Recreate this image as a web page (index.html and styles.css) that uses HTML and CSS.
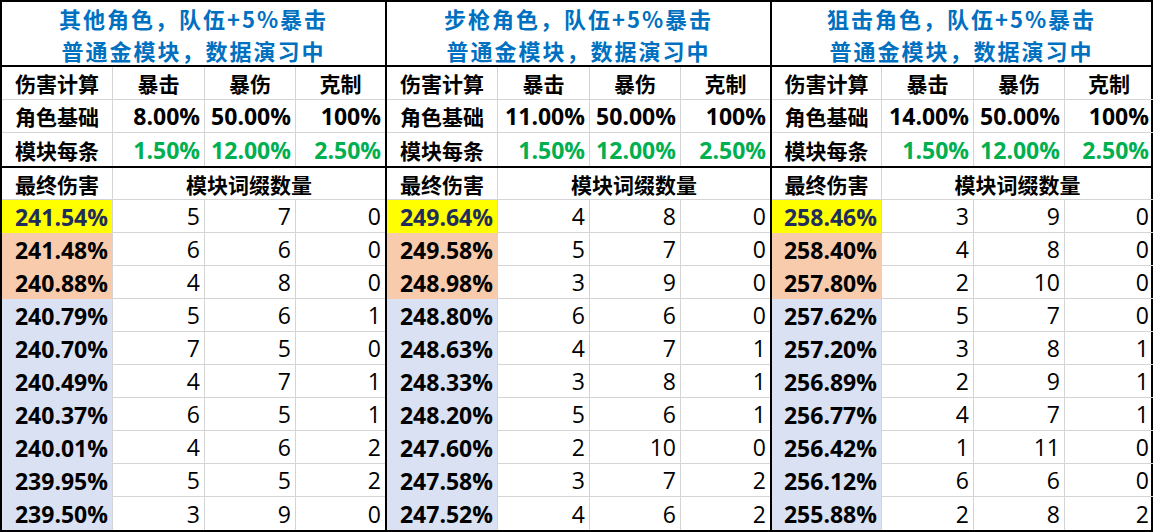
FILE: index.html
```html
<!DOCTYPE html>
<html lang="zh-CN">
<head>
<meta charset="utf-8">
<title>模块词缀计算</title>
<link rel="stylesheet" href="styles.css">
</head>
<body>
<main class="sheet">
  <section class="panel p1">
    <div class="title"><div class="tl">其他角色，队伍+5%暴击</div><div class="tl">普通金模块，数据演习中</div></div>
    <div class="grid params">
      <div class="c h">伤害计算</div><div class="c h ctr">暴击</div><div class="c h ctr">暴伤</div><div class="c h ctr last">克制</div>
      <div class="c h">角色基础</div><div class="c num b">8.00%</div><div class="c num b">50.00%</div><div class="c num b last">100%</div>
      <div class="c h bot">模块每条</div><div class="c num b g bot">1.50%</div><div class="c num b g bot">12.00%</div><div class="c num b g bot last">2.50%</div>
    </div>
    <div class="grid results">
      <div class="c h">最终伤害</div><div class="c h ctr span3">模块词缀数量</div>
      <div class="c k y">241.54%</div><div class="c num">5</div><div class="c num">7</div><div class="c num last">0</div>
      <div class="c k o">241.48%</div><div class="c num">6</div><div class="c num">6</div><div class="c num last">0</div>
      <div class="c k o">240.88%</div><div class="c num">4</div><div class="c num">8</div><div class="c num last">0</div>
      <div class="c k bl">240.79%</div><div class="c num">5</div><div class="c num">6</div><div class="c num last">1</div>
      <div class="c k bl">240.70%</div><div class="c num">7</div><div class="c num">5</div><div class="c num last">0</div>
      <div class="c k bl">240.49%</div><div class="c num">4</div><div class="c num">7</div><div class="c num last">1</div>
      <div class="c k bl">240.37%</div><div class="c num">6</div><div class="c num">5</div><div class="c num last">1</div>
      <div class="c k bl">240.01%</div><div class="c num">4</div><div class="c num">6</div><div class="c num last">2</div>
      <div class="c k bl">239.95%</div><div class="c num">5</div><div class="c num">5</div><div class="c num last">2</div>
      <div class="c k bl bot">239.50%</div><div class="c num bot">3</div><div class="c num bot">9</div><div class="c num bot last">0</div>
    </div>
  </section>
  <section class="panel p2">
    <div class="title"><div class="tl">步枪角色，队伍+5%暴击</div><div class="tl">普通金模块，数据演习中</div></div>
    <div class="grid params">
      <div class="c h">伤害计算</div><div class="c h ctr">暴击</div><div class="c h ctr">暴伤</div><div class="c h ctr last">克制</div>
      <div class="c h">角色基础</div><div class="c num b">11.00%</div><div class="c num b">50.00%</div><div class="c num b last">100%</div>
      <div class="c h bot">模块每条</div><div class="c num b g bot">1.50%</div><div class="c num b g bot">12.00%</div><div class="c num b g bot last">2.50%</div>
    </div>
    <div class="grid results">
      <div class="c h">最终伤害</div><div class="c h ctr span3">模块词缀数量</div>
      <div class="c k y">249.64%</div><div class="c num">4</div><div class="c num">8</div><div class="c num last">0</div>
      <div class="c k o">249.58%</div><div class="c num">5</div><div class="c num">7</div><div class="c num last">0</div>
      <div class="c k o">248.98%</div><div class="c num">3</div><div class="c num">9</div><div class="c num last">0</div>
      <div class="c k bl">248.80%</div><div class="c num">6</div><div class="c num">6</div><div class="c num last">0</div>
      <div class="c k bl">248.63%</div><div class="c num">4</div><div class="c num">7</div><div class="c num last">1</div>
      <div class="c k bl">248.33%</div><div class="c num">3</div><div class="c num">8</div><div class="c num last">1</div>
      <div class="c k bl">248.20%</div><div class="c num">5</div><div class="c num">6</div><div class="c num last">1</div>
      <div class="c k bl">247.60%</div><div class="c num">2</div><div class="c num">10</div><div class="c num last">0</div>
      <div class="c k bl">247.58%</div><div class="c num">3</div><div class="c num">7</div><div class="c num last">2</div>
      <div class="c k bl bot">247.52%</div><div class="c num bot">4</div><div class="c num bot">6</div><div class="c num bot last">2</div>
    </div>
  </section>
  <section class="panel p3">
    <div class="title"><div class="tl">狙击角色，队伍+5%暴击</div><div class="tl">普通金模块，数据演习中</div></div>
    <div class="grid params">
      <div class="c h">伤害计算</div><div class="c h ctr">暴击</div><div class="c h ctr">暴伤</div><div class="c h ctr last">克制</div>
      <div class="c h">角色基础</div><div class="c num b">14.00%</div><div class="c num b">50.00%</div><div class="c num b last">100%</div>
      <div class="c h bot">模块每条</div><div class="c num b g bot">1.50%</div><div class="c num b g bot">12.00%</div><div class="c num b g bot last">2.50%</div>
    </div>
    <div class="grid results">
      <div class="c h">最终伤害</div><div class="c h ctr span3">模块词缀数量</div>
      <div class="c k y">258.46%</div><div class="c num">3</div><div class="c num">9</div><div class="c num last">0</div>
      <div class="c k o">258.40%</div><div class="c num">4</div><div class="c num">8</div><div class="c num last">0</div>
      <div class="c k o">257.80%</div><div class="c num">2</div><div class="c num">10</div><div class="c num last">0</div>
      <div class="c k bl">257.62%</div><div class="c num">5</div><div class="c num">7</div><div class="c num last">0</div>
      <div class="c k bl">257.20%</div><div class="c num">3</div><div class="c num">8</div><div class="c num last">1</div>
      <div class="c k bl">256.89%</div><div class="c num">2</div><div class="c num">9</div><div class="c num last">1</div>
      <div class="c k bl">256.77%</div><div class="c num">4</div><div class="c num">7</div><div class="c num last">1</div>
      <div class="c k bl">256.42%</div><div class="c num">1</div><div class="c num">11</div><div class="c num last">0</div>
      <div class="c k bl">256.12%</div><div class="c num">6</div><div class="c num">6</div><div class="c num last">0</div>
      <div class="c k bl bot">255.88%</div><div class="c num bot">2</div><div class="c num bot">8</div><div class="c num bot last">2</div>
    </div>
  </section>
</main>
</body>
</html>
```
FILE: styles.css
```css
* { box-sizing: border-box; }
html, body { margin: 0; padding: 0; background: #fff; }
body {
  font-family: "Open Sans", "Noto Sans CJK SC", sans-serif;
  color: #000;
}
.sheet {
  display: flex;
  width: 1157px;
  height: 532px;
  overflow: hidden;
}
.panel {
  display: flex;
  flex-direction: column;
  border-top: 2px solid #000;
  border-bottom: 2px solid #000;
  border-left: 2px solid #000;
  height: 532px;
}
.p1 { width: 385px; }
.p2 { width: 385px; }
.p3 { width: 383px; border-right: 2px solid #000; }
.title {
  height: 65px;
  border-bottom: 2px solid #000;
  color: #0070c0;
  font-family: "Noto Sans CJK SC", sans-serif;
  font-weight: 700;
  font-size: 22px;
  letter-spacing: 2px;
  text-align: center;
  display: flex;
  flex-direction: column;
  justify-content: center;
}
.tl {
  height: 32px;
  line-height: 32px;
  white-space: nowrap;
}
.grid { display: grid; }
.p1 .grid, .p2 .grid { grid-template-columns: 111px 92px 91px 89px; }
.p3 .grid { grid-template-columns: 110px 92px 91px 88px; }
.params {
  grid-template-rows: 33px 33px 33px;
  border-bottom: 2px solid #000;
}
.results {
  grid-template-rows: 32px repeat(10, 33px);
}
.c {
  display: flex;
  align-items: center;
  border-right: 1px solid #d4d4d4;
  border-bottom: 1px solid #d4d4d4;
  white-space: nowrap;
  overflow: hidden;
}
.c.last { border-right: none; }
.c.bot { border-bottom: none; }
.h {
  justify-content: center;
  font-family: "Noto Sans CJK SC", sans-serif;
  font-weight: 700;
  font-size: 21px;
}
.span3 { grid-column: span 3; border-right: none; }
.num {
  justify-content: flex-end;
  padding-right: 4px;
  font-size: 23px;
  font-weight: 400;
}
.num.b { font-weight: 700; }
.g { color: #00b050; }
.k {
  justify-content: flex-end;
  padding-right: 4px;
  font-size: 23px;
  font-weight: 700;
  border-bottom: none;
}
.y { background: #ffff00; color: #1f2d5c; }
.o { background: #f8cbad; }
.bl { background: #d9e1f2; }
```
